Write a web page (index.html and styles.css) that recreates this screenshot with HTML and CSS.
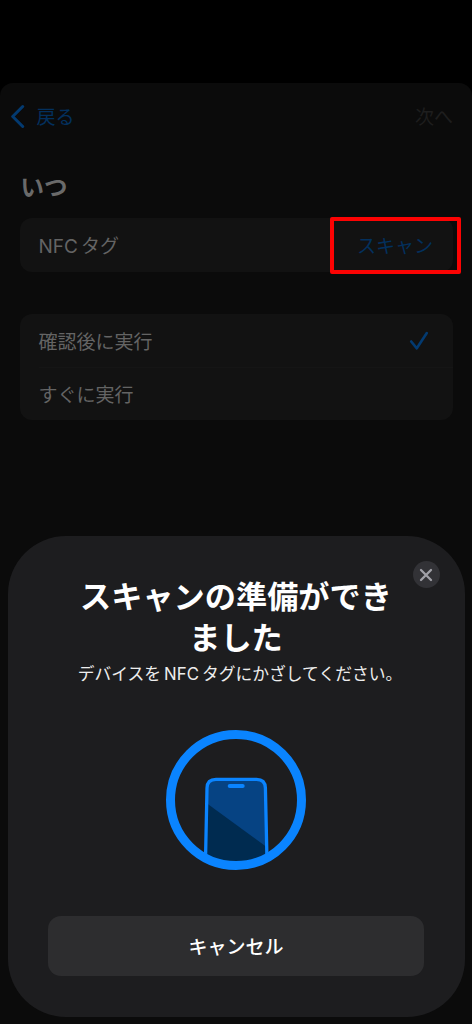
FILE: index.html
```html
<!DOCTYPE html>
<html lang="ja">
<head>
<meta charset="utf-8">
<title>NFC</title>
<link rel="stylesheet" href="styles.css">
</head>
<body>
<div class="screen">
  <main class="page">
    <nav class="nav">
      <a class="back"><svg class="chevron" width="16" height="24" viewBox="0 0 16 24"><path d="M12.7 2.5 L2.700 12.500 L12.700 22.500"/></svg><span>戻る</span></a>
      <span class="next">次へ</span>
    </nav>
    <h2 class="heading">いつ</h2>
    <section class="card">
      <div class="row"><span class="label"><span class="latin">NFC</span>タグ</span><a class="scan">スキャン<span class="highlight"></span></a></div>
    </section>
    <section class="card options">
      <div class="row"><span>確認後に実行</span><svg class="check" width="20" height="20" viewBox="0 0 20 20"><path d="M2.2 10.500 L7.8 17.300 L17.8 2"/></svg></div>
      <div class="row"><span>すぐに実行</span></div>
    </section>
  </main>
  <div class="sheet">
    <button class="close"><svg width="14" height="14" viewBox="0 0 14 14"><path d="M2 2 L12 12 M12 2 L2 12"/></svg></button>
    <h1 class="title">スキャンの準備ができ<br>ました</h1>
    <p class="subtitle">デバイスを<span class="latin">NFC</span>タグにかざしてください。</p>
    <svg class="phone" width="140" height="140" viewBox="0 0 140 140">
      <defs>
        <clipPath id="disc"><circle cx="70" cy="70" r="65"/></clipPath>
        <clipPath id="body"><path d="M39 140 L41 57 Q41.3 49.3 49 49.3 H91.500 Q99 49.300 99.300 57 L101.500 140 Z"/></clipPath>
      </defs>
      <g clip-path="url(#disc)">
        <g clip-path="url(#body)">
          <rect x="30" y="40" width="80" height="100" fill="#064383"/>
          <path d="M30 65.500 L110 123.700 V140 H30 Z" fill="#002b50"/>
        </g>
        <path d="M39.300 140 L41 58 Q41.200 49.300 50 49.300 H90.500 Q99.200 49.300 99.400 58 L101.200 140" fill="none" stroke="#0a84ff" stroke-width="3.300"/>
        <rect x="61.700" y="54" width="17" height="4" rx="2" fill="#0a84ff"/>
      </g>
      <circle cx="70" cy="70" r="65.500" fill="none" stroke="#0a84ff" stroke-width="9"/>
    </svg>
    <button class="cancel">キャンセル</button>
  </div>
</div>
</body>
</html>
```
FILE: styles.css
```css
* { box-sizing: border-box; }
body { margin: 0; background: #000; font-family: "Noto Sans CJK JP", "Noto Sans", sans-serif; }
h1, h2, p { margin: 0; }
button { border: 0; padding: 0; font-family: inherit; }
.latin { font-family: Inter, "Liberation Sans", sans-serif; }

.screen { position: relative; height: 1024px; padding-top: 83px; overflow: hidden; background: #000; }
.page {
  height: 941px;
  padding: 0 19px 0 19.5px;
  border-radius: 13px 13px 0 0;
  background: #0b0b0b;
  color: #646464;
  font-size: 19px;
  line-height: 28px;
}
.nav { display: flex; justify-content: space-between; align-items: center; height: 66px; margin: 0 0 1px -10px; }
.back { display: flex; align-items: center; gap: 11px; color: #03305d; }
.chevron { fill: none; stroke: #033a70; stroke-width: 3; stroke-linecap: round; stroke-linejoin: round; }
.next { color: #1e1e1e; }
.heading { height: 68px; padding: 19px 0 0 1px; font-size: 23.500px; line-height: 34px; color: #6a6a6a; font-weight: 700; }
.card { border-radius: 12px; background: #121212; }
.row { display: flex; align-items: center; justify-content: space-between; height: 53.500px; padding: 0 20px 0 19px; }
.label { padding-top: 2px; }
.label .latin { margin-right: 3px; }
.scan { position: relative; color: #03305d; }
.highlight { position: absolute; left: -27px; top: -14px; width: 131px; height: 57px; border: 4px solid #fc0303; border-radius: 2px; }
.options { margin-top: 42.500px; }
.options .row { height: 53px; padding-right: 24px; }
.options .row + .row { margin-left: 19px; padding-left: 0; border-top: 1px solid #151515; }
.check { fill: none; stroke: #033a70; stroke-width: 2.600; stroke-linecap: round; stroke-linejoin: round; }

.sheet {
  position: absolute;
  left: 7.500px;
  top: 536px;
  width: 457px;
  height: 480.500px;
  padding: 38px 40.500px 0;
  display: flex;
  flex-direction: column;
  align-items: center;
  border-radius: 58px;
  background: #1d1d1f;
  color: #fff;
}
.close { position: absolute; right: 25px; top: 25px; width: 27px; height: 27px; display: grid; place-items: center; border-radius: 50%; background: #323236; }
.close path { fill: none; stroke: #a0a0a7; stroke-width: 2.300; stroke-linecap: round; }
.title { font-size: 31.200px; line-height: 41px; font-weight: 700; text-align: center; white-space: nowrap; }
.subtitle { margin: 3px 0 0 8px; font-size: 16.800px; line-height: 28px; color: #ededed; white-space: nowrap; }
.subtitle .latin { margin: 0 3px; }
.phone { margin-top: 42px; flex: none; }
.cancel { margin-top: 46px; width: 376px; height: 60px; border-radius: 13px; background: #2d2d2f; color: #fff; font-size: 19px; font-weight: 500; line-height: 28px; }
```
